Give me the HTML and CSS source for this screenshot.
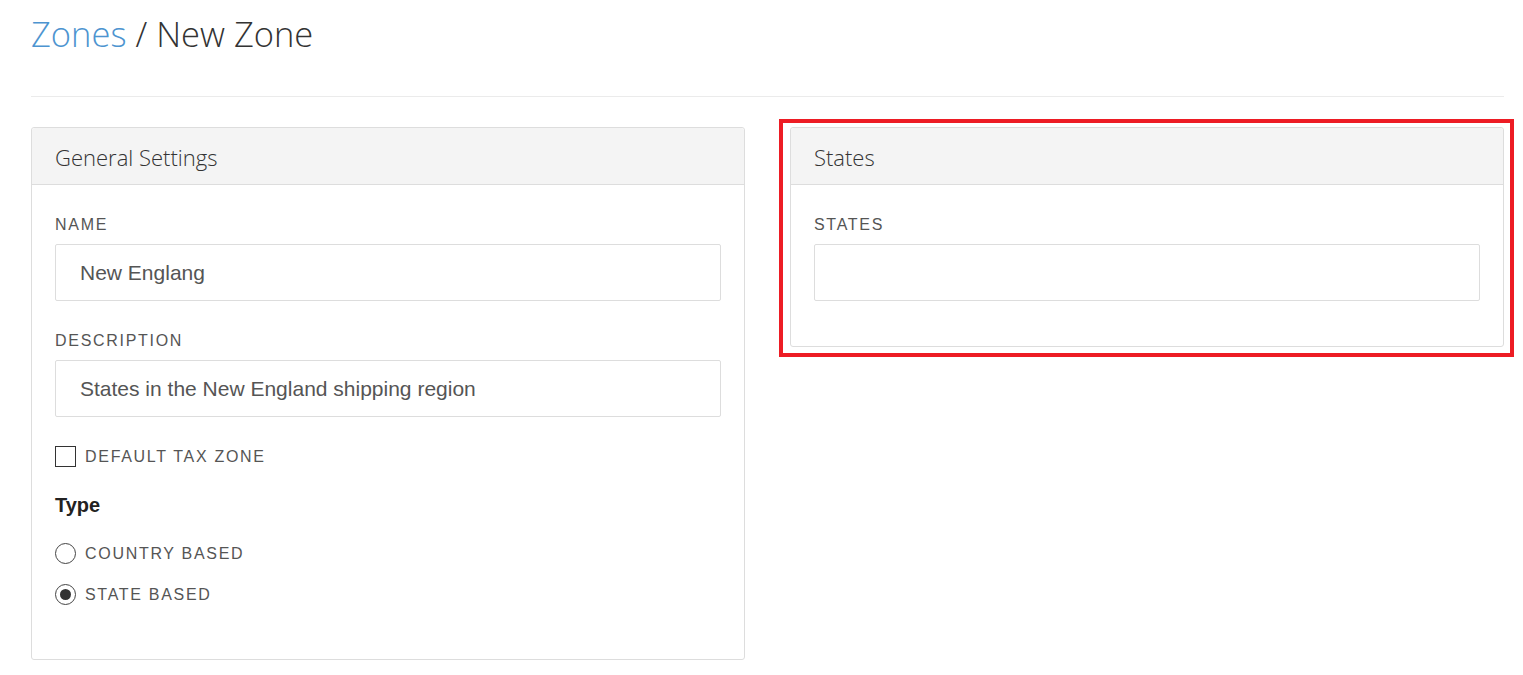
FILE: index.html
```html
<!DOCTYPE html>
<html lang="en">
<head>
<meta charset="utf-8">
<title>Zones / New Zone</title>
<link rel="stylesheet" href="styles.css">
</head>
<body>
<div class="page">
  <h1 class="page-title"><a class="crumb" href="#">Zones</a> / New Zone</h1>
  <hr class="divider">
  <div class="columns">
    <section class="panel">
      <header class="panel-head">General Settings</header>
      <div class="panel-body">
        <div class="field">
          <label class="field-label">Name</label>
          <div class="input">New Englang</div>
        </div>
        <div class="field">
          <label class="field-label">Description</label>
          <div class="input">States in the New England shipping region</div>
        </div>
        <div class="check-row">
          <span class="checkbox"></span>
          <span class="option-label">Default Tax Zone</span>
        </div>
        <div class="type-title">Type</div>
        <div class="radio-row">
          <span class="radio"></span>
          <span class="option-label">Country Based</span>
        </div>
        <div class="radio-row last">
          <span class="radio checked"></span>
          <span class="option-label">State Based</span>
        </div>
      </div>
    </section>
    <div class="highlight-wrap">
      <section class="panel">
        <header class="panel-head">States</header>
        <div class="panel-body">
          <div class="field last">
            <label class="field-label">States</label>
            <div class="input"></div>
          </div>
        </div>
      </section>
      <div class="highlight"></div>
    </div>
  </div>
</div>
</body>
</html>
```

FILE: styles.css
```css
html, body {
  margin: 0;
  padding: 0;
  background: #ffffff;
}

body {
  font-family: "Liberation Sans", Arial, sans-serif;
  color: #555555;
}

.page {
  margin-left: 31px;
  width: 1473px;
}

.page-title {
  margin: 0;
  padding-top: 12px;
  font-family: "Open Sans", "Segoe UI", sans-serif;
  font-weight: 300;
  font-size: 34.5px;
  line-height: 44px;
  color: #333333;
}

.crumb {
  color: #4d94d0;
  text-decoration: none;
}

.divider {
  margin: 40px 0 0 0;
  border: 0;
  border-top: 1px solid #ebebeb;
  height: 0;
}

.columns {
  display: grid;
  grid-template-columns: 714px 714px;
  column-gap: 45px;
  align-items: start;
  margin-top: 30px;
}

.panel {
  border: 1px solid #dddddd;
  border-radius: 3px;
  background: #ffffff;
}

.panel-head {
  height: 56px;
  background: #f4f4f4;
  border-bottom: 1px solid #dddddd;
  border-radius: 3px 3px 0 0;
  padding-left: 23px;
  font-family: "Open Sans", "Segoe UI", sans-serif;
  font-weight: 300;
  font-size: 22px;
  line-height: 58px;
  color: #333333;
}

.panel-body {
  padding: 30px 23px 23px 23px;
}

.field {
  margin-bottom: 29px;
}

.field + .field {
  padding-top: 1px;
}

.field.last {
  margin-bottom: 22px;
}

.field-label {
  display: block;
  height: 20px;
  line-height: 20px;
  margin-bottom: 9px;
  font-size: 16px;
  letter-spacing: 1.7px;
  text-transform: uppercase;
  color: #555555;
}

.input {
  box-sizing: border-box;
  height: 57px;
  border: 1px solid #dddddd;
  border-radius: 2px;
  padding-left: 24px;
  font-size: 21px;
  line-height: 55px;
  color: #555555;
}

.check-row,
.radio-row {
  display: flex;
  align-items: center;
  gap: 9px;
  height: 21px;
}

.check-row {
  margin-bottom: 27px;
}

.checkbox {
  box-sizing: border-box;
  width: 21px;
  height: 21px;
  border: 1.5px solid #333333;
  flex: none;
}

.option-label {
  font-size: 16px;
  letter-spacing: 1.7px;
  text-transform: uppercase;
  color: #555555;
  line-height: 20px;
}

.type-title {
  font-weight: bold;
  font-size: 20px;
  line-height: 22px;
  color: #222222;
  margin-bottom: 27px;
}

.radio-row {
  margin-bottom: 20px;
}

.radio-row.last {
  margin-bottom: 31px;
}

.radio {
  box-sizing: border-box;
  width: 21px;
  height: 21px;
  border: 1.3px solid #444444;
  border-radius: 50%;
  flex: none;
  display: flex;
  align-items: center;
  justify-content: center;
}

.radio.checked::after {
  content: "";
  width: 11px;
  height: 11px;
  border-radius: 50%;
  background: #333333;
}

.highlight-wrap {
  position: relative;
}

.highlight {
  position: absolute;
  top: -8px;
  right: -10px;
  bottom: -10px;
  left: -11px;
  border: 4px solid #ed1c24;
  pointer-events: none;
}
```
